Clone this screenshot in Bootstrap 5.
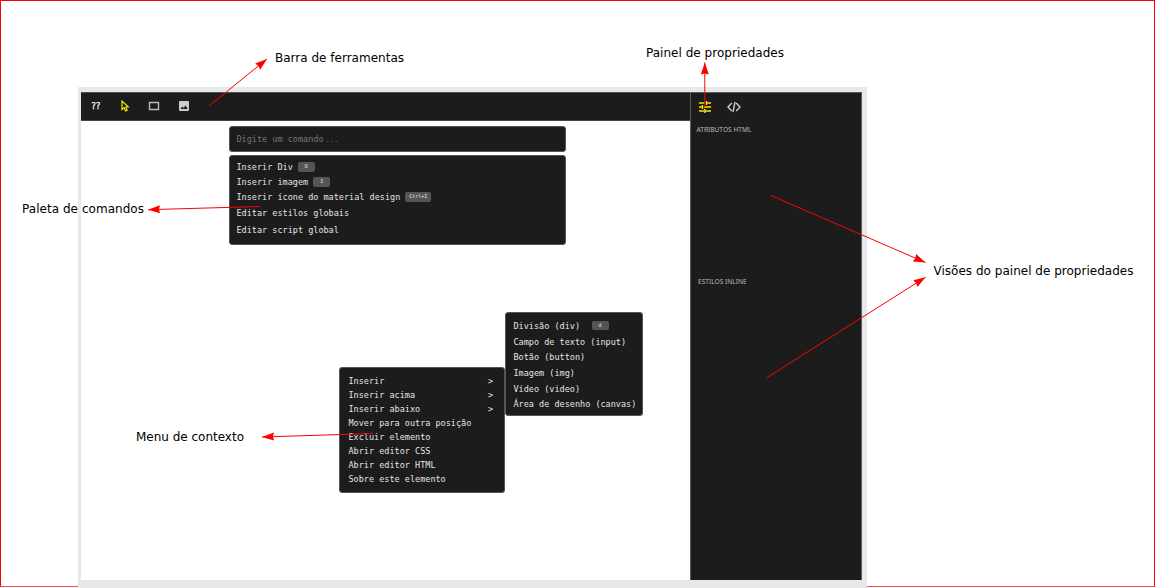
<!DOCTYPE html>
<html lang="pt-BR">
<head>
<meta charset="utf-8">
<meta name="viewport" content="width=device-width, initial-scale=1">
<title>Editor visual</title>
<link href="https://cdn.jsdelivr.net/npm/bootstrap@5.3.0/dist/css/bootstrap.min.css" rel="stylesheet">
<style>
body{width:1155px;height:588px;font-family:"DejaVu Sans",sans-serif}
.board{width:1155px;height:588px;padding:87px 0 0 78px}
.board-frame{inset:0 0 1px 0;border:1px solid #f00;border-bottom-color:#ff4c4c}
.editor{width:789px;height:501px;background:#e7e8ea;padding:5px 5px 8px 3px}
.dark{background:#1c1c1c;color:#e4e4e4}
.toolbar{height:29px;border-top:1px solid #505050;border-bottom:1px solid #454545}
.mono{font-family:"DejaVu Sans Mono",monospace;font-size:8.51px;line-height:14px;white-space:nowrap}
.tools{padding:0 0 2px 10px}
.tools>.help{width:10px;color:#fff;-webkit-text-stroke:.25px #fff;letter-spacing:-.5px}
.cursor{margin-left:17px}
.frame-tool{margin-left:16px}
.image-tool{margin-left:18px}
.side{width:172px;border:1px solid #5c5c5c;border-bottom:0}
.side-tabs{height:28px;padding-left:7px}
.code-tab{margin-left:15px}
.side-title{font:6.6px/10px "Noto Sans",sans-serif;color:#bbb}
.side .attrs{height:152px;padding:4px 0 0 5.5px}
.side .styles{padding:4px 0 0 7px}
.palette{width:337px;margin:5px 0 0 148px}
.panel{border:1px solid #555;border-radius:3px}
.search{height:26px;padding:5px 6.5px;color:#777}
.search span{font-size:7px;margin-left:2px}
.commands{height:90px;margin-top:2.5px;padding:4px 6.5px}
.commands>div{height:15px;line-height:15px}
.commands>div:nth-child(n+4){height:17px;line-height:17px}
.key{background:#555;color:#eee;border-radius:2px;height:10px;font-size:5px;line-height:9px;width:17px;text-align:center;margin-left:5px}
.key.wide{width:26px}
.ctx{left:258px;top:275px;width:166px;height:126px;padding:6px 11px 0 8.5px}
.sub{left:424px;top:220px;width:137.5px;height:104px;padding:5px 0 0 7.5px}
.sub>div{height:15.7px;line-height:16px}
.sub .key{margin-left:11.5px;height:9px}
.notes{inset:0}
.notes text{font:12px "DejaVu Sans",sans-serif;fill:#000}
</style>
</head>
<body class="overflow-hidden bg-white">
<main class="board position-relative">
  <div class="board-frame position-absolute"></div>
  <div class="editor position-relative d-flex">
    <section class="flex-grow-1 bg-white d-flex flex-column position-relative">
      <nav class="toolbar tools dark d-flex align-items-center">
        <span class="mono help">??</span>
        <svg class="cursor" width="14" height="14" viewBox="0 0 14 14" fill="none" stroke="#f2e500" stroke-width="1.2"><path d="M4 2V10.5L6 8.8L7.6 12L9.2 11.2L7.7 8.1L10.3 7.8Z"/></svg>
        <svg class="frame-tool" width="12" height="10" viewBox="0 0 12 10" fill="none" stroke="#bbb" stroke-width="1.4"><path d="M1.5 1.5H10.5V8.5H1.5Z"/></svg>
        <svg class="image-tool" width="12" height="12" viewBox="0 0 12 12"><rect x="1" y="1" width="10" height="10" rx="1" fill="#ccc"/><path d="M2.4 9L4.3 6.4L5.6 8L7.5 5.4L9.8 9Z" fill="#1c1c1c"/></svg>
      </nav>
      <div class="palette mono">
        <div class="panel dark search">Digite um comando<span>...</span></div>
        <div class="panel dark commands">
          <div class="d-flex align-items-center">Inserir Div<span class="key">D</span></div>
          <div class="d-flex align-items-center">Inserir imagem<span class="key">I</span></div>
          <div class="d-flex align-items-center">Inserir ícone do material design<span class="key wide">Ctrl+I</span></div>
          <div>Editar estilos globais</div>
          <div>Editar script global</div>
        </div>
      </div>
      <div class="panel dark mono position-absolute ctx">
        <div class="d-flex justify-content-between"><span>Inserir</span><span>&gt;</span></div>
        <div class="d-flex justify-content-between"><span>Inserir acima</span><span>&gt;</span></div>
        <div class="d-flex justify-content-between"><span>Inserir abaixo</span><span>&gt;</span></div>
        <div>Mover para outra posição</div>
        <div>Excluir elemento</div>
        <div>Abrir editor CSS</div>
        <div>Abrir editor HTML</div>
        <div>Sobre este elemento</div>
      </div>
      <div class="panel dark mono position-absolute sub">
        <div class="d-flex align-items-center">Divisão (div)<span class="key">d</span></div>
        <div>Campo de texto (input)</div>
        <div>Botão (button)</div>
        <div>Imagem (img)</div>
        <div>Vídeo (video)</div>
        <div>Área de desenho (canvas)</div>
      </div>
    </section>
    <aside class="side dark flex-shrink-0">
      <div class="side-tabs d-flex align-items-center">
        <svg width="14" height="14" viewBox="0 0 14 14" stroke="#f2e500" stroke-width="1.4" fill="none"><path d="M1 3H6.5M8.5 3H13M8.5 1V5M1 7H4.5M6 7H13M4.5 5V9M1 11H6M7 11H13M6.8 9V13"/></svg>
        <svg class="code-tab" width="14" height="12" viewBox="0 0 14 12" stroke="#ccc" stroke-width="1.4" fill="none"><path d="M4.8 2L1 6L4.8 10M9.2 2L13 6L9.2 10M8 1L6 11"/></svg>
      </div>
      <div class="side-title attrs">ATRIBUTOS HTML</div>
      <div class="side-title styles">ESTILOS INLINE</div>
    </aside>
  </div>
  <svg class="notes position-absolute" width="1155" height="588" viewBox="0 0 1155 588">
    <defs><marker id="head" markerUnits="userSpaceOnUse" markerWidth="14" markerHeight="10" refX="12" refY="4" orient="auto"><path d="M0 0L12 4L0 8L1 4Z" fill="#f00"/></marker></defs>
    <g stroke="#f00" stroke-width="1">
      <path d="M209 106L267 59" marker-end="url(#head)"/>
      <path d="M704.8 107V62.5" marker-end="url(#head)"/>
      <path d="M260 206.5L148 209.7" marker-end="url(#head)"/>
      <path d="M373 433.5L262 437" marker-end="url(#head)"/>
      <path d="M771 195.5L925.5 262.5" marker-end="url(#head)"/>
      <path d="M767 377.5L925.5 277.3" marker-end="url(#head)"/>
    </g>
    <text x="275" y="62" textLength="129">Barra de ferramentas</text>
    <text x="646" y="57" textLength="138">Painel de propriedades</text>
    <text x="22" y="213" textLength="122">Paleta de comandos</text>
    <text x="136" y="440.5" textLength="108">Menu de contexto</text>
    <text x="933.5" y="275" textLength="200">Visões do painel de propriedades</text>
  </svg>
</main>
<script src="https://cdn.jsdelivr.net/npm/bootstrap@5.3.0/dist/js/bootstrap.bundle.min.js"></script>
</body>
</html>
